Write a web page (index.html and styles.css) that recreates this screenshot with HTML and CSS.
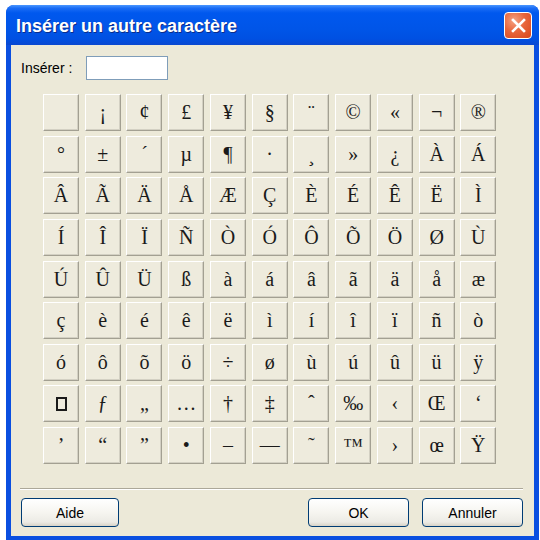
FILE: index.html
```html
<!DOCTYPE html>
<html lang="fr">
<head>
    <meta charset="UTF-8">
    <meta name="viewport" content="width=device-width, initial-scale=1.0">
    <title>Insérer un autre caractère</title>
    <link rel="stylesheet" href="styles.css">
</head>
<body>
    <div class="window">
        <div class="titlebar">
            <span class="title">Insérer un autre caractère</span>
            <button class="close-btn">
                <svg width="15" height="15" viewBox="0 0 15 15">
                    <path d="M2 2 L13 13 M13 2 L2 13" stroke="#fff" stroke-width="2.6" stroke-linecap="square"/>
                </svg>
            </button>
        </div>

        <div class="client">
            <div class="insert-row">
                <label class="insert-label">Insérer :</label>
                <input class="insert-box" type="text">
            </div>

            <div class="grid">
                <!-- ligne 1 -->
                <div class="cell">&nbsp;</div>
                <div class="cell">¡</div>
                <div class="cell">¢</div>
                <div class="cell">£</div>
                <div class="cell">¥</div>
                <div class="cell">§</div>
                <div class="cell">¨</div>
                <div class="cell">©</div>
                <div class="cell">«</div>
                <div class="cell">¬</div>
                <div class="cell">®</div>
                <!-- ligne 2 -->
                <div class="cell">°</div>
                <div class="cell">±</div>
                <div class="cell">´</div>
                <div class="cell">µ</div>
                <div class="cell">¶</div>
                <div class="cell">·</div>
                <div class="cell">¸</div>
                <div class="cell">»</div>
                <div class="cell">¿</div>
                <div class="cell">À</div>
                <div class="cell">Á</div>
                <!-- ligne 3 -->
                <div class="cell">Â</div>
                <div class="cell">Ã</div>
                <div class="cell">Ä</div>
                <div class="cell">Å</div>
                <div class="cell">Æ</div>
                <div class="cell">Ç</div>
                <div class="cell">È</div>
                <div class="cell">É</div>
                <div class="cell">Ê</div>
                <div class="cell">Ë</div>
                <div class="cell">Ì</div>
                <!-- ligne 4 -->
                <div class="cell">Í</div>
                <div class="cell">Î</div>
                <div class="cell">Ï</div>
                <div class="cell">Ñ</div>
                <div class="cell">Ò</div>
                <div class="cell">Ó</div>
                <div class="cell">Ô</div>
                <div class="cell">Õ</div>
                <div class="cell">Ö</div>
                <div class="cell">Ø</div>
                <div class="cell">Ù</div>
                <!-- ligne 5 -->
                <div class="cell">Ú</div>
                <div class="cell">Û</div>
                <div class="cell">Ü</div>
                <div class="cell">ß</div>
                <div class="cell">à</div>
                <div class="cell">á</div>
                <div class="cell">â</div>
                <div class="cell">ã</div>
                <div class="cell">ä</div>
                <div class="cell">å</div>
                <div class="cell">æ</div>
                <!-- ligne 6 -->
                <div class="cell">ç</div>
                <div class="cell">è</div>
                <div class="cell">é</div>
                <div class="cell">ê</div>
                <div class="cell">ë</div>
                <div class="cell">ì</div>
                <div class="cell">í</div>
                <div class="cell">î</div>
                <div class="cell">ï</div>
                <div class="cell">ñ</div>
                <div class="cell">ò</div>
                <!-- ligne 7 -->
                <div class="cell">ó</div>
                <div class="cell">ô</div>
                <div class="cell">õ</div>
                <div class="cell">ö</div>
                <div class="cell">÷</div>
                <div class="cell">ø</div>
                <div class="cell">ù</div>
                <div class="cell">ú</div>
                <div class="cell">û</div>
                <div class="cell">ü</div>
                <div class="cell">ÿ</div>
                <!-- ligne 8 -->
                <div class="cell"><span class="missing"></span></div>
                <div class="cell">ƒ</div>
                <div class="cell">„</div>
                <div class="cell">…</div>
                <div class="cell">†</div>
                <div class="cell">‡</div>
                <div class="cell">ˆ</div>
                <div class="cell">‰</div>
                <div class="cell">‹</div>
                <div class="cell">Œ</div>
                <div class="cell">‘</div>
                <!-- ligne 9 -->
                <div class="cell">’</div>
                <div class="cell">“</div>
                <div class="cell">”</div>
                <div class="cell">•</div>
                <div class="cell">–</div>
                <div class="cell">—</div>
                <div class="cell">˜</div>
                <div class="cell">™</div>
                <div class="cell">›</div>
                <div class="cell">œ</div>
                <div class="cell">Ÿ</div>
            </div>

            <div class="separator"></div>

            <div class="buttons">
                <button class="btn btn-help">Aide</button>
                <div class="spacer"></div>
                <button class="btn">OK</button>
                <button class="btn">Annuler</button>
            </div>
        </div>
    </div>
</body>
</html>
```

FILE: styles.css
```css
* {
    box-sizing: border-box;
}
body {
    margin: 0;
    background-color: #ffffff;
    font-family: "Liberation Sans", Arial, sans-serif;
}
.window {
    margin: 5px 0 0 6px;
    width: 533px;
    height: 536px;
    display: flex;
    flex-direction: column;
    border-radius: 8px 8px 0 0;
    overflow: hidden;
    background-color: #0a4fe0;
}
.titlebar {
    height: 40px;
    flex-shrink: 0;
    display: flex;
    align-items: center;
    justify-content: space-between;
    padding: 3px 7px 0 10px;
    background: linear-gradient(to bottom, #4a97ff 0%, #1a6cf5 8%, #0058ee 20%, #0055e8 60%, #0050e2 85%, #0a48d0 100%);
}
.title {
    color: #ffffff;
    font-size: 18px;
    font-weight: bold;
    text-shadow: 1px 1px 0 #0b2d8a;
}
.close-btn {
    width: 28px;
    height: 27px;
    margin-top: -2px;
    padding: 0;
    display: flex;
    align-items: center;
    justify-content: center;
    border: 1px solid #ffffff;
    border-radius: 4px;
    background: radial-gradient(circle at 35% 30%, #f6a283 0%, #e8663c 45%, #d8461b 100%);
}
.client {
    flex: 1;
    margin: 0 5px 5px 5px;
    background-color: #ece9d8;
    display: flex;
    flex-direction: column;
}
.insert-row {
    display: flex;
    align-items: center;
    margin-top: 11px;
    padding-left: 10px;
}
.insert-label {
    width: 65px;
    font-size: 14px;
    color: #000000;
}
.insert-box {
    width: 82px;
    height: 24px;
    border: 1px solid #7f9db9;
    background-color: #ffffff;
}
.grid {
    display: grid;
    grid-template-columns: repeat(11, 36px);
    grid-template-rows: repeat(9, 37px);
    column-gap: 5.74px;
    row-gap: 4.63px;
    margin: 14px 0 0 32px;
}
.cell {
    display: flex;
    align-items: center;
    justify-content: center;
    background-color: #eeebdd;
    border-top: 1px solid #ffffff;
    border-left: 1px solid #ffffff;
    border-right: 1px solid #a3a092;
    border-bottom: 1px solid #a3a092;
    box-shadow: inset -1px -1px 0 #d3d0c3;
    font-family: "Liberation Serif", "Times New Roman", serif;
    font-size: 20px;
    color: #1a1a1a;
}
.missing {
    width: 11px;
    height: 14px;
    border: 2px solid #1a1a1a;
}
.separator {
    margin: 24px 11px 0 9px;
    border-top: 1px solid #aca899;
    border-bottom: 1px solid #ffffff;
}
.buttons {
    display: flex;
    margin-top: 8px;
    padding: 0 11px 0 10px;
    gap: 13px;
}
.spacer {
    flex: 1;
}
.btn {
    width: 101px;
    height: 29px;
    font-family: "Liberation Sans", Arial, sans-serif;
    font-size: 14px;
    color: #000000;
    border: 1px solid #003c74;
    border-radius: 4px;
    background: linear-gradient(to bottom, #ffffff 0%, #f6f5f0 50%, #ecebe5 85%, #d8d3c7 100%);
}
.btn-help {
    width: 98px;
}
```
